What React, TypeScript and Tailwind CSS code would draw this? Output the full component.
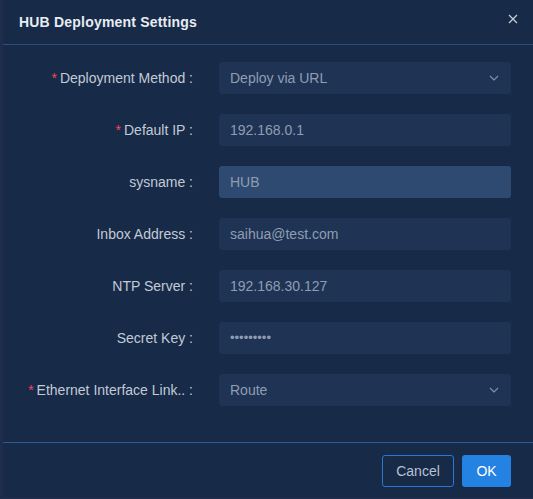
import React from 'react';

const fields = [
  { label: 'Deployment Method', value: 'Deploy via URL', required: true, select: true },
  { label: 'Default IP', value: '192.168.0.1', required: true },
  { label: 'sysname', value: 'HUB', active: true },
  { label: 'Inbox Address', value: 'saihua@test.com' },
  { label: 'NTP Server', value: '192.168.30.127' },
  { label: 'Secret Key', value: '•••••••••', secret: true },
  { label: 'Ethernet Interface Link..', value: 'Route', required: true, select: true },
];

function Chevron() {
  return (
    <svg width="10" height="6" viewBox="0 0 10 6" fill="none" className="shrink-0">
      <path d="M1 1l4 4l4-4" stroke="#8593a8" strokeWidth="1.1" />
    </svg>
  );
}

export default function App() {
  return (
    <div className="w-[533px] h-[499px] bg-[#1d2d4b] flex" style={{ fontFamily: '"Liberation Sans", Arial, sans-serif' }}>
      <div className="ml-[3px] w-[530px] h-[497px] bg-[#172a48] flex flex-col">
        {/* header */}
        <div className="h-[45px] shrink-0 flex items-center justify-between pl-[16px] pr-[15px] border-b border-[#2d4d7a]">
          <span className="text-[14px] font-bold text-[#e8ecf2] tracking-[0.2px]">HUB Deployment Settings</span>
          <svg width="10" height="10" viewBox="0 0 10 10" className="mb-[6px]">
            <path d="M1 1l8 8M9 1l-8 8" stroke="#c3cad6" strokeWidth="1.3" />
          </svg>
        </div>

        {/* body */}
        <div className="flex-1 flex flex-col gap-[20px] pt-[17px] pr-[22px]">
          {fields.map((f) => (
            <div key={f.label} className="flex items-center h-[32px]">
              <div className="w-[190px] shrink-0 flex justify-end items-center text-[14px] text-[#c2cad6]">
                {f.required && <span className="text-[#f5455f] mr-[3px] text-[14px]">*</span>}
                <span>{f.label} :</span>
              </div>
              <div
                className={
                  'ml-[26px] flex-1 h-[32px] rounded-[3px] flex items-center justify-between pl-[11px] pr-[12px] text-[14px] ' +
                  (f.active ? 'bg-[#2e4a70] text-[#8f9db2]' : 'bg-[#1f3455] text-[#8f9db2]')
                }
              >
                <span className={f.secret ? 'text-[13px]' : ''}>{f.value}</span>
                {f.select && <Chevron />}
              </div>
            </div>
          ))}
        </div>

        {/* footer */}
        <div className="h-[55px] shrink-0 border-t border-[#2d5a90] flex items-start justify-end gap-[8px] pt-[12px] pr-[22px]">
          <button className="h-[32px] w-[72px] rounded-[3px] border border-[#2a78d2] text-[#b8c2d0] text-[14px]">Cancel</button>
          <button className="h-[32px] w-[49px] rounded-[3px] bg-[#2382e2] text-white text-[14px]">OK</button>
        </div>
      </div>
    </div>
  );
}
